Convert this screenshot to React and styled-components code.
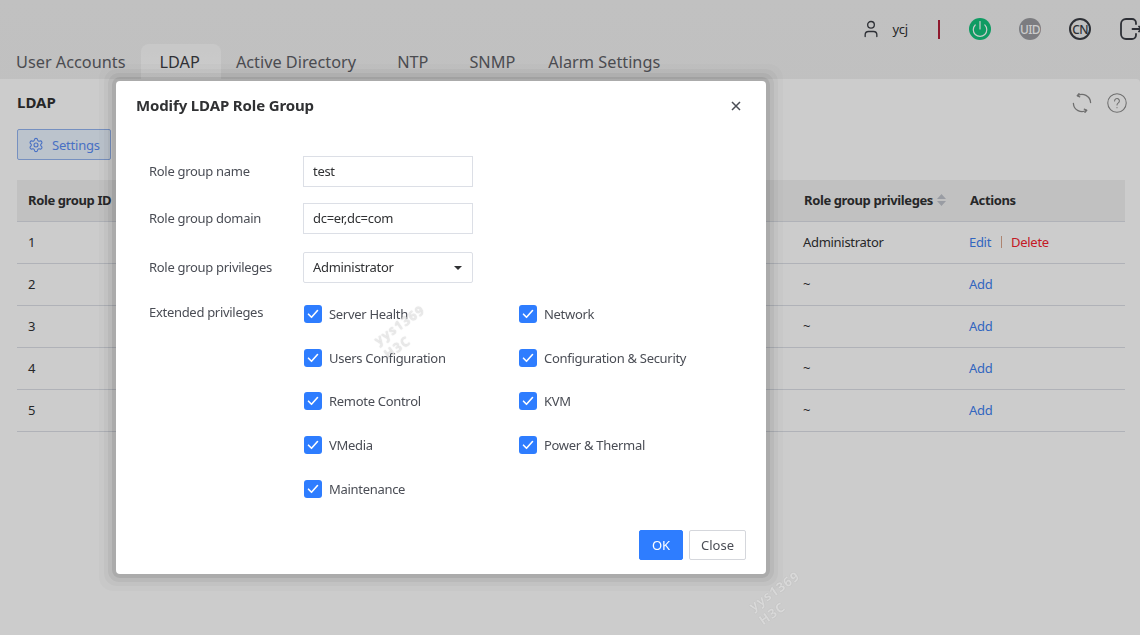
import React from "react";
import styled, { createGlobalStyle } from "styled-components";
import { Power, Settings as SettingsIcon, User } from "lucide-react";

const GlobalStyle = createGlobalStyle`
  html, body {
    margin: 0;
    padding: 0;
    height: 100%;
    overflow: hidden;
    background: #fff;
    font-family: "Noto Sans", "Open Sans", sans-serif;
    color: #303133;
  }
`;

const Page = styled.div`
  width: 1140px;
  height: 635px;
  display: flex;
  flex-direction: column;
  background: linear-gradient(#f2f2f2, #ececec);
  overflow: hidden;
`;

const TopBar = styled.header`
  height: 44px;
  flex: none;
  display: flex;
  align-items: center;
  justify-content: flex-end;
  padding-top: 14px;
  box-sizing: border-box;
  margin-right: -2px;
`;

const UserName = styled.span`
  font-size: 13px;
  letter-spacing: -0.2px;
  margin: 0 30px 0 11px;
  color: #303133;
`;

const Divider = styled.span`
  width: 2px;
  height: 19px;
  background: #b3213a;
  margin-right: 29px;
`;

const RoundBadge = styled.span`
  width: 22px;
  height: 22px;
  border-radius: 50%;
  flex: none;
  display: flex;
  align-items: center;
  justify-content: center;
  margin-right: 28px;
  box-sizing: border-box;
  font-size: 12px;
  font-weight: 500;
  letter-spacing: -0.6px;
  color: ${(p) => p.$color || "#fff"};
  background: ${(p) => p.$bg || "transparent"};
  border: ${(p) => (p.$outline ? "2px solid #3a3d44" : "none")};
`;

const Tabs = styled.nav`
  height: 35px;
  flex: none;
  display: flex;
  align-items: stretch;
  padding-left: 16px;
`;

const Tab = styled.a`
  font-size: 16.3px;
  line-height: 36px;
  color: #5e6066;
  margin-right: ${(p) => p.$gap}px;
  ${(p) =>
    p.$active &&
    `
    background: linear-gradient(#fafafa, #ffffff);
    border-radius: 8px 8px 0 0;
    padding: 0 21px 0 19px;
    margin-left: -4px;
    color: #3c3e44;
  `}
`;

const Panel = styled.main`
  flex: 1;
  background: #fff;
  border-radius: 0 4px 0 0;
  padding: 0 15px 0 17px;
`;

const PanelHead = styled.div`
  height: 47px;
  display: flex;
  align-items: center;
  justify-content: space-between;
`;

const PanelTitle = styled.h2`
  margin: 0 0 1px;
  font-size: 15px;
  font-weight: 700;
  color: #303133;
`;

const PanelTools = styled.div`
  display: flex;
  gap: 15px;
  align-items: center;
  color: #8a8a8a;
  margin-right: -2px;
`;

const SettingsButton = styled.button`
  width: 94px;
  height: 31px;
  margin: 3px 0 20px;
  display: flex;
  align-items: center;
  gap: 8px;
  padding: 0 0 0 10px;
  box-sizing: border-box;
  border: 1px solid #94b4f0;
  border-radius: 2px;
  background: #eaf4ff;
  color: #5a8cf5;
  font: inherit;
  font-size: 13px;
  letter-spacing: -0.2px;
`;

const TableRow = styled.div`
  display: grid;
  grid-template-columns: 775px 166px 1fr;
  height: 42px;
  box-sizing: border-box;
  align-items: center;
  padding: 0 0 2px 11px;
  font-size: 13px;
  letter-spacing: ${(p) => (p.$head ? -0.38 : -0.3)}px;
  font-weight: ${(p) => (p.$head ? 700 : 400)};
  background: ${(p) => (p.$head ? "#f2f2f2" : "transparent")};
  border-bottom: 1px solid #dcdfe6;
`;

const SortCell = styled.span`
  display: flex;
  align-items: center;
  gap: 4px;
  padding-left: 1px;
`;

const ActionsHead = styled.span`
  padding-left: 1px;
`;

const SortArrows = styled.svg`
  width: 9px;
  height: 12px;
  color: #c0c4cc;
`;

const RowLink = styled.a`
  color: ${(p) => (p.$danger ? "#f5222d" : "#4080f0")};
`;

const LinkSep = styled.span`
  display: inline-block;
  width: 1px;
  height: 12px;
  margin: 0 9px 0 10px;
  vertical-align: -1px;
  background: #d9a58c;
`;

const Overlay = styled.div`
  position: fixed;
  inset: 0;
  background: rgba(0, 0, 0, 0.2);
  padding: 81px 0 0 116px;
  box-sizing: border-box;
`;

const Modal = styled.section`
  width: 650px;
  height: 493px;
  background: #fff;
  border-radius: 4px;
  box-sizing: border-box;
  padding: 0 20px;
  display: flex;
  flex-direction: column;
  box-shadow: 0 0 0 4px rgba(0, 0, 0, 0.08), 0 0 0 8px rgba(0, 0, 0, 0.05),
    0 0 0 12px rgba(0, 0, 0, 0.03), 0 0 0 17px rgba(0, 0, 0, 0.02);
`;

const ModalHead = styled.div`
  height: 50px;
  flex: none;
  display: flex;
  align-items: center;
  justify-content: space-between;
`;

const ModalTitle = styled.h3`
  margin: 0 0 2px;
  font-size: 15px;
  letter-spacing: -0.13px;
  font-weight: 700;
  color: #303133;
`;

const CloseX = styled.svg`
  width: 10px;
  height: 10px;
  margin-right: 5px;
  color: #4a4d55;
`;

const Form = styled.div`
  flex: 1;
  padding: 25px 0 0 13px;
`;

const FormRow = styled.div`
  display: grid;
  grid-template-columns: 154px 1fr;
  align-items: ${(p) => (p.$top ? "start" : "center")};
  margin-bottom: ${(p) => p.$mb}px;
  font-size: 13px;
  letter-spacing: -0.3px;
  color: #4a4d55;
`;

const FormLabel = styled.span`
  padding-bottom: ${(p) => (p.$top ? 0 : 2)}px;
  margin-top: ${(p) => (p.$top ? -2 : 0)}px;
`;

const Field = styled.div`
  width: 170px;
  height: 31px;
  box-sizing: border-box;
  border: 1px solid #dcdfe6;
  border-radius: ${(p) => (p.$select ? 2 : 0)}px;
  display: flex;
  align-items: center;
  justify-content: space-between;
  padding: 0 10px 2px 9px;
  font-size: 13px;
  color: #303133;
`;

const Caret = styled.span`
  width: 0;
  height: 0;
  margin-top: 2px;
  border-left: 4px solid transparent;
  border-right: 4px solid transparent;
  border-top: 4px solid #303133;
`;

const CheckGrid = styled.div`
  display: grid;
  grid-template-columns: 215px 1fr;
  grid-auto-rows: 43.7px;
  margin-left: 1px;
`;

const CheckItem = styled.label`
  display: flex;
  align-items: flex-start;
  gap: 7px;
  line-height: 18px;
  color: #4a4d55;
`;

const CheckBox = styled.span`
  width: 18px;
  height: 18px;
  flex: none;
  border-radius: 3px;
  background: #2e7dff;
  display: flex;
  align-items: center;
  justify-content: center;
`;

const ModalFoot = styled.div`
  height: 44px;
  flex: none;
  display: flex;
  justify-content: flex-end;
  gap: 6px;
`;

const FootButton = styled.button`
  height: 30px;
  width: ${(p) => (p.$primary ? 44 : 57)}px;
  padding: 0;
  border-radius: 2px;
  border: 1px solid ${(p) => (p.$primary ? "#2e7dff" : "#d5d7dc")};
  background: ${(p) => (p.$primary ? "#2e7dff" : "#fff")};
  color: ${(p) => (p.$primary ? "#fff" : "#4a4d55")};
  font: inherit;
  font-size: 13px;
`;

const Watermark = styled.div`
  position: fixed;
  left: ${(p) => p.$x}px;
  top: ${(p) => p.$y}px;
  width: 62px;
  transform: rotate(-35deg);
  font-size: 13px;
  font-weight: 700;
  line-height: 17px;
  white-space: nowrap;
  letter-spacing: 1px;
  color: rgba(255, 255, 255, 0.6);
  text-shadow: 0 0 1px rgba(0, 0, 0, 0.25);
`;

const LogoutIcon = styled.svg`
  width: 22px;
  height: 22px;
  flex: none;
  margin-left: 1px;
`;

const Logout = () => (
  <LogoutIcon viewBox="0 0 22 22" fill="none" stroke="#3a3d44" strokeWidth="1.8" strokeLinecap="round" strokeLinejoin="round">
    <path d="M16 6V5a4 4 0 0 0-4-4H6a5 5 0 0 0-5 5v10a5 5 0 0 0 5 5h6a4 4 0 0 0 4-4v-1" />
    <path d="M12.500 11H22M19 8.500l3 2.500-3 2.500" />
  </LogoutIcon>
);

const Refresh = () => (
  <svg width="20" height="20" viewBox="0 0 20 20" fill="none" stroke="currentColor" strokeWidth="1.3" strokeLinecap="round" strokeLinejoin="round">
    <path d="M5.500 2.700A8.600 8.600 0 0 1 18.600 9.500" />
    <path d="M14.500 17.300A8.600 8.600 0 0 1 1.400 10.500" />
    <path d="M7 .6 5.300 2.700l2.400 1.100M13 19.400l1.700-2.100-2.400-1.100" />
  </svg>
);

const Help = () => (
  <svg width="20" height="20" viewBox="0 0 21 21" fill="none" stroke="currentColor" strokeWidth="1.1" strokeLinecap="round">
    <circle cx="10.500" cy="10.500" r="9.700" />
    <path d="M8 8.300a2.500 2.500 0 1 1 3.900 2c-.9.6-1.400 1.100-1.400 2.200" />
    <path d="M10.500 15.200v.2" />
  </svg>
);

const Check = () => (
  <svg width="12" height="10" viewBox="0 0 12 10" fill="none" stroke="#fff" strokeWidth="1.600" strokeLinecap="round" strokeLinejoin="round">
    <path d="M1.500 5.200 4.500 8.300 10.500 1.500" />
  </svg>
);

const tabs = [
  { name: "User Accounts", gap: 19 },
  { name: "LDAP", gap: 15, active: true },
  { name: "Active Directory", gap: 41 },
  { name: "NTP", gap: 41 },
  { name: "SNMP", gap: 33 },
  { name: "Alarm Settings", gap: 0 },
];

const privileges = [
  "Server Health",
  "Network",
  "Users Configuration",
  "Configuration & Security",
  "Remote Control",
  "KVM",
  "VMedia",
  "Power & Thermal",
  "Maintenance",
];

export default function App() {
  return (
    <>
      <GlobalStyle />
      <Page>
        <TopBar>
          <User size={20} color="#3a3d44" strokeWidth={1.6} />
          <UserName>ycj</UserName>
          <Divider />
          <RoundBadge $bg="#14c27c">
            <Power size={18} strokeWidth={1.6} color="#fff" />
          </RoundBadge>
          <RoundBadge $bg="#9b9ca0">UID</RoundBadge>
          <RoundBadge $outline $color="#3a3d44">CN</RoundBadge>
          <Logout />
        </TopBar>
        <Tabs>
          {tabs.map((t) => (
            <Tab key={t.name} $active={t.active} $gap={t.gap}>{t.name}</Tab>
          ))}
        </Tabs>
        <Panel>
          <PanelHead>
            <PanelTitle>LDAP</PanelTitle>
            <PanelTools>
              <Refresh />
              <Help />
            </PanelTools>
          </PanelHead>
          <SettingsButton>
            <SettingsIcon size={16} strokeWidth={1.6} />
            Settings
          </SettingsButton>
          <TableRow $head>
            <span>Role group ID</span>
            <SortCell>
              Role group privileges
              <SortArrows viewBox="0 0 9 12" fill="currentColor">
                <path d="M4.500 0 9 5H0zM0 7h9l-4.500 5z" />
              </SortArrows>
            </SortCell>
            <ActionsHead>Actions</ActionsHead>
          </TableRow>
          {[1, 2, 3, 4, 5].map((id) => (
            <TableRow key={id}>
              <span>{id}</span>
              <span>{id === 1 ? "Administrator" : "~"}</span>
              {id === 1 ? (
                <span>
                  <RowLink>Edit</RowLink>
                  <LinkSep />
                  <RowLink $danger>Delete</RowLink>
                </span>
              ) : (
                <RowLink>Add</RowLink>
              )}
            </TableRow>
          ))}
        </Panel>
      </Page>
      <Overlay>
        <Modal>
          <ModalHead>
            <ModalTitle>Modify LDAP Role Group</ModalTitle>
            <CloseX viewBox="0 0 10 10" fill="none" stroke="currentColor" strokeWidth="1.500">
              <path d="M1 1l8 8M9 1l-8 8" />
            </CloseX>
          </ModalHead>
          <Form>
            <FormRow $mb={16}>
              <FormLabel>Role group name</FormLabel>
              <Field>test</Field>
            </FormRow>
            <FormRow $mb={18}>
              <FormLabel>Role group domain</FormLabel>
              <Field>dc=er,dc=com</Field>
            </FormRow>
            <FormRow $mb={22}>
              <FormLabel>Role group privileges</FormLabel>
              <Field $select>
                Administrator
                <Caret />
              </Field>
            </FormRow>
            <FormRow $top $mb={0}>
              <FormLabel $top>Extended privileges</FormLabel>
              <CheckGrid>
                {privileges.map((p) => (
                  <CheckItem key={p}>
                    <CheckBox>
                      <Check />
                    </CheckBox>
                    {p}
                  </CheckItem>
                ))}
              </CheckGrid>
            </FormRow>
          </Form>
          <ModalFoot>
            <FootButton $primary>OK</FootButton>
            <FootButton>Close</FootButton>
          </ModalFoot>
        </Modal>
      </Overlay>
      <Watermark $x={375} $y={314}>yys1369<br />H3C</Watermark>
      <Watermark $x={750} $y={580}>yys1369<br />H3C</Watermark>
    </>
  );
}
